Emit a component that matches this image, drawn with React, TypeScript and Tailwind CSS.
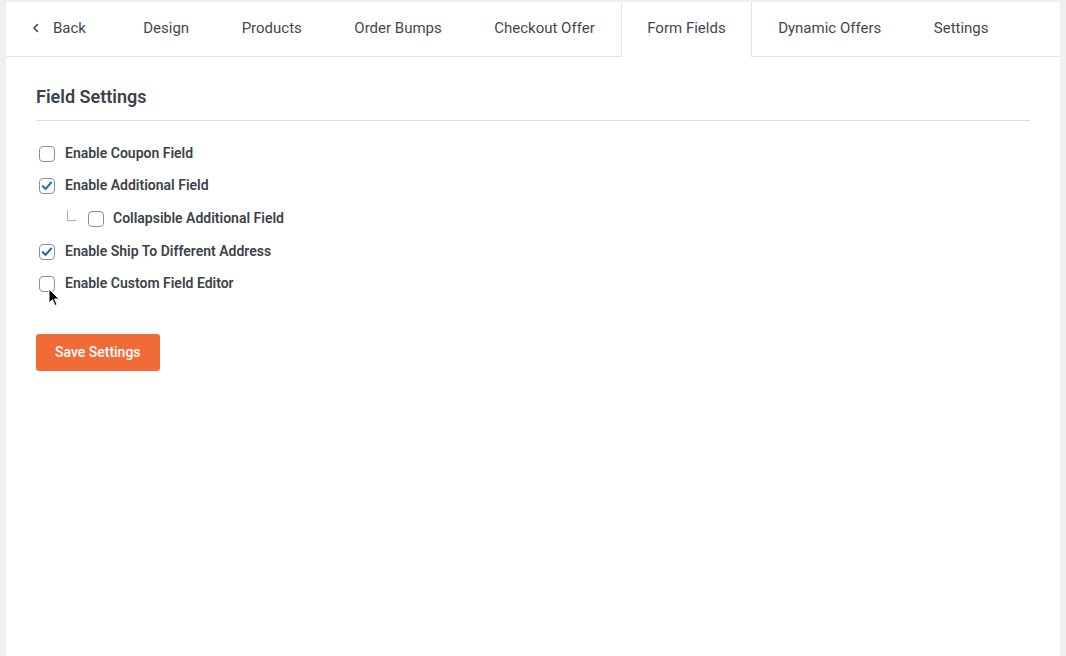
import React from "react";

const Check = ({ checked }: { checked: boolean }) => (
  <span className="relative flex h-4 w-4 shrink-0 items-center justify-center rounded-[4px] border border-[#8c8f94] bg-white">
    {checked && (
      <svg viewBox="0 0 16 16" className="h-[14px] w-[14px]" fill="none">
        <path d="M3.2 8.2 L6.4 11.3 L12.8 4" stroke="#2271b1" strokeWidth="2.4" strokeLinecap="round" strokeLinejoin="round" />
      </svg>
    )}
  </span>
);

const Row = ({ label, checked }: { label: string; checked: boolean }) => (
  <label className="flex h-[17px] items-center gap-[10px] pl-[3px]">
    <Check checked={checked} />
    <span className="text-[14px] font-semibold text-[#3c434a]">{label}</span>
  </label>
);

export default function App() {
  const tabs = ["Design", "Products", "Order Bumps", "Checkout Offer", "Form Fields", "Dynamic Offers", "Settings"];
  return (
    <div className="min-h-[656px] bg-[#f0f0f1] px-[6px] pt-[2px]" style={{ fontFamily: "Roboto, 'Liberation Sans', sans-serif" }}>
      <div className="relative min-h-[654px] bg-white">
        <div className="flex h-[55px] border-b border-[#e5e5e5]">
          <div className="flex items-center pb-[2px] pl-[25px] pr-[31px] text-[15px] text-[#43484e]">
            <svg viewBox="0 0 10 10" className="mr-[12px] h-[10px] w-[10px]" fill="none">
              <path d="M6.5 1.5 L3 5 L6.5 8.5" stroke="#3c434a" strokeWidth="1.6" strokeLinecap="round" strokeLinejoin="round" />
            </svg>
            Back
          </div>
          {tabs.map((t) => (
            <div
              key={t}
              className={
                t === "Form Fields"
                  ? "-mb-px flex items-center border-x border-[#e5e5e5] bg-white px-[25.25px] pb-[3px] text-[15px] text-[#43484e]"
                  : "flex items-center px-[26.25px] pb-[2px] text-[15px] text-[#43484e]"
              }
            >
              {t}
            </div>
          ))}
        </div>
        <div className="px-[30px] pt-[29px]">
          <h2 className="border-b border-[#dcdcde] pb-[12px] text-[18px] font-semibold leading-[22px] text-[#3c434a]">Field Settings</h2>
          <div className="mt-[24px] flex flex-col">
            <Row label="Enable Coupon Field" checked={false} />
            <div className="mt-[15px]"><Row label="Enable Additional Field" checked={true} /></div>
            <div className="mt-[14px] flex items-center pl-[31px]">
              <span className="mb-[6px] mr-[12px] h-[11px] w-[9px] border-b border-l border-[#a7aaad]" />
              <Check checked={false} />
              <span className="ml-[9px] text-[14px] font-semibold text-[#3c434a]">Collapsible Additional Field</span>
            </div>
            <div className="mt-[14px]"><Row label="Enable Ship To Different Address" checked={true} /></div>
            <div className="mt-[15px]"><Row label="Enable Custom Field Editor" checked={false} /></div>
          </div>
          <button className="mt-[42px] h-[37px] rounded-[3px] bg-[#f26b36] px-[19px] text-[14px] font-medium text-white">
            Save Settings
          </button>
        </div>
        <svg className="absolute left-[42px] top-[286px]" width="12" height="19" viewBox="0 0 12 19">
          <path d="M1 1 L1 15 L4.5 11.7 L7 17.5 L9 16.6 L6.6 11 L11 11 Z" fill="#000" stroke="#fff" strokeWidth="1" strokeLinejoin="round" />
        </svg>
      </div>
    </div>
  );
}
